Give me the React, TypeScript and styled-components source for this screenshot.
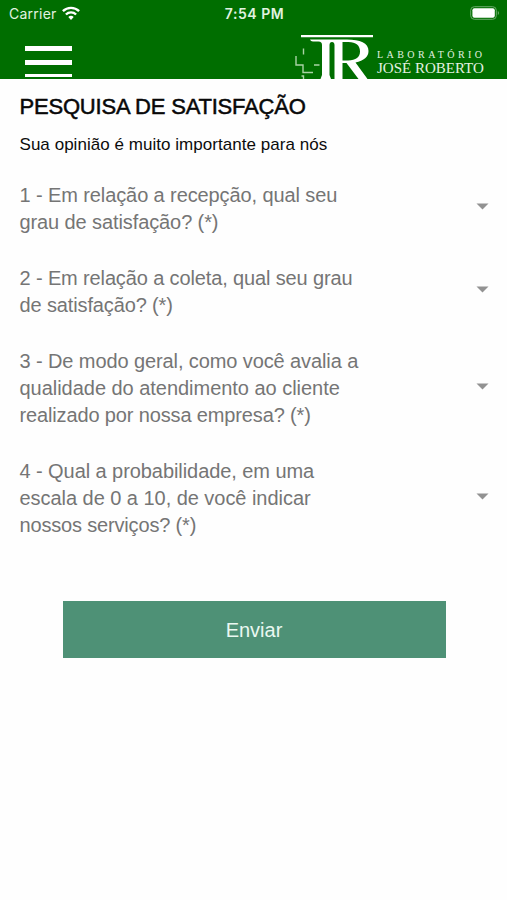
import React from "react";
import styled, { createGlobalStyle } from "styled-components";

const GlobalStyle = createGlobalStyle`
  * { box-sizing: border-box; }
  body {
    margin: 0;
    background: #fefefe;
    font-family: "Liberation Sans", Arial, sans-serif;
  }
`;

const Screen = styled.div`
  width: 507px;
  height: 900px;
  overflow: hidden;
`;

const Header = styled.header`
  height: 79px;
  background: #006e00;
  overflow: hidden;
`;

const StatusBar = styled.div`
  height: 28px;
  padding: 0 7px 0 9px;
  display: grid;
  grid-template-columns: 1fr auto 1fr;
  align-items: center;
  color: #e2f3e0;
  font-family: Inter, sans-serif;
  font-size: 14px;
  line-height: 28px;
`;

const Carrier = styled.div`
  display: flex;
  align-items: center;
  gap: 5px;
  letter-spacing: 0.25px;
`;

const Clock = styled.div`
  font-size: 14px;
  font-weight: 600;
  letter-spacing: 0.55px;
`;

const BatteryIcon = styled.svg`
  justify-self: end;
  display: block;
  margin-top: -2px;
`;

const WifiIcon = styled.svg`
  display: block;
  margin-top: -3px;
`;

const NavBar = styled.div`
  height: 51px;
  padding: 0 23px 0 25px;
  display: flex;
  justify-content: space-between;
  align-items: flex-start;
`;

const MenuButton = styled.button`
  width: 46.5px;
  height: 49px;
  padding: 18px 0 0;
  border: 0;
  background: none;
  display: flex;
  flex-direction: column;
  gap: 9px;
`;

const MenuBar = styled.span<{ $thick: number }>`
  width: 100%;
  height: ${(p) => p.$thick}px;
  flex: none;
  background: #fff;
`;

const Logo = styled.div`
  display: flex;
  align-items: flex-start;
  gap: 3px;
`;

const LogoMark = styled.svg`
  display: block;
`;

const LogoText = styled.div`
  width: 107px;
  padding-top: 21px;
  display: flex;
  flex-direction: column;
  font-family: "Liberation Serif", "Times New Roman", serif;
  color: #e4f2e2;
  white-space: nowrap;
`;

const LogoSmall = styled.span`
  font-size: 10px;
  line-height: 12px;
  letter-spacing: 3.45px;
`;

const LogoLarge = styled.span`
  font-size: 15px;
  line-height: 15px;
`;

const Content = styled.main`
  padding: 16px 18px 0 19.5px;
`;

const Title = styled.h1`
  margin: 0;
  font-size: 22px;
  line-height: 26px;
  font-weight: 400;
  letter-spacing: -0.2px;
  color: #080808;
  -webkit-text-stroke: 0.5px #080808;
  white-space: nowrap;
  transform: translateY(-1px);
`;

const Subtitle = styled.p`
  margin: 14px 0 0;
  font-size: 17px;
  line-height: 20px;
  letter-spacing: 0.04px;
  color: #0c0c0c;
  white-space: nowrap;
`;

const Questions = styled.div`
  margin-top: 27px;
  display: flex;
  flex-direction: column;
  gap: 29px;
`;

const Question = styled.div`
  display: flex;
  justify-content: space-between;
  align-items: center;
  font-size: 20px;
  line-height: 27px;
  color: #757575;
`;

const Line = styled.div<{ $track: number }>`
  white-space: nowrap;
  letter-spacing: ${(p) => p.$track}px;
`;

const Caret = styled.svg`
  display: block;
  margin-top: -5px;
`;

const Submit = styled.button`
  display: block;
  width: 383px;
  height: 57px;
  margin: 62px 0 0 43px;
  padding: 2px 0 0;
  border: 0;
  background: #4e9176;
  color: #eaf8f1;
  font-family: inherit;
  font-size: 20px;
`;

const questions: { text: string; track: number }[][] = [
  [
    { text: "1 - Em relação a recepção, qual seu", track: -0.1 },
    { text: "grau de satisfação? (*)", track: -0.1 },
  ],
  [
    { text: "2 - Em relação a coleta, qual seu grau", track: -0.13 },
    { text: "de satisfação? (*)", track: -0.13 },
  ],
  [
    { text: "3 - De modo geral, como você avalia a", track: -0.1 },
    { text: "qualidade do atendimento ao cliente", track: -0.03 },
    { text: "realizado por nossa empresa? (*)", track: -0.14 },
  ],
  [
    { text: "4 - Qual a probabilidade, em uma", track: -0.07 },
    { text: "escala de 0 a 10, de você indicar", track: -0.04 },
    { text: "nossos serviços? (*)", track: -0.17 },
  ],
];

export default function App() {
  return (
    <Screen>
      <GlobalStyle />
      <Header>
        <StatusBar>
          <Carrier>
            Carrier
            <WifiIcon width="18" height="14" viewBox="0 0 18 14" fill="none" stroke="#fff" strokeWidth="2.4">
              <path d="M0.9 5.2a11.6 11.6 0 0 1 16.2 0" />
              <path d="M3.9 8.5a7.3 7.3 0 0 1 10.2 0" />
              <path d="M9 14 6.3 11.1a3.9 3.9 0 0 1 5.4 0Z" fill="#fff" stroke="none" />
            </WifiIcon>
          </Carrier>
          <Clock>7:54 PM</Clock>
          <BatteryIcon width="30" height="14" viewBox="0 0 30 14">
            <rect x="0.7" y="0.7" width="25.6" height="12.6" rx="3.6" fill="none" stroke="#69aa69" strokeWidth="1" />
            <rect x="2.4" y="2.3" width="22.4" height="9.4" rx="2" fill="#fff" />
            <path d="M27.8 5v4c1.6-.6 1.6-3.4 0-4Z" fill="#69aa69" />
          </BatteryIcon>
        </StatusBar>
        <NavBar>
          <MenuButton aria-label="Menu">
            <MenuBar $thick={5} />
            <MenuBar $thick={5} />
            <MenuBar $thick={3} />
          </MenuButton>
          <Logo>
            <LogoMark width="80" height="51" viewBox="294 28 80 51">
              <path d="M301 35H373V37.2H301Z" fill="#fff" />
              <path
                d="M310 39.5H347C360 39.500 368.5 43 368.5 51C368.5 57 364 60.5 355.5 62.5L367.5 79H358.5L346.5 63H342.5V79H334.5V45C334.5 43 333.5 42 332 42C330.500 42 329.500 43 329.500 45V75L331 79H320.500L322 75V45C322 43 321 41.500 318.500 41.500H313C311.500 41.500 310.500 40.500 310 39.500ZM342.500 42V60.500H348C356 60.500 360 57 360 51.500C360 45.500 356 42 348.500 42Z"
                fill="#fff"
                fillRule="evenodd"
              />
              <path
                d="M303.500 48.500V54.500M296 56V65H303V72.500H313M314 65H319.500M301.500 76H303.500V79"
                fill="none"
                stroke="#a9d3a5"
                strokeWidth="1.4"
              />
            </LogoMark>
            <LogoText>
              <LogoSmall>LABORATÓRIO</LogoSmall>
              <LogoLarge>JOSÉ ROBERTO</LogoLarge>
            </LogoText>
          </Logo>
        </NavBar>
      </Header>
      <Content>
        <Title>PESQUISA DE SATISFAÇÃO</Title>
        <Subtitle>Sua opinião é muito importante para nós</Subtitle>
        <Questions>
          {questions.map((lines) => (
            <Question key={lines[0].text}>
              <div>
                {lines.map((line) => (
                  <Line key={line.text} $track={line.track}>
                    {line.text}
                  </Line>
                ))}
              </div>
              <Caret width="13" height="7" viewBox="0 0 13 7">
                <path d="M0.5 0.5H12.5L6.5 6.5Z" fill="#929292" />
              </Caret>
            </Question>
          ))}
        </Questions>
        <Submit>Enviar</Submit>
      </Content>
    </Screen>
  );
}
